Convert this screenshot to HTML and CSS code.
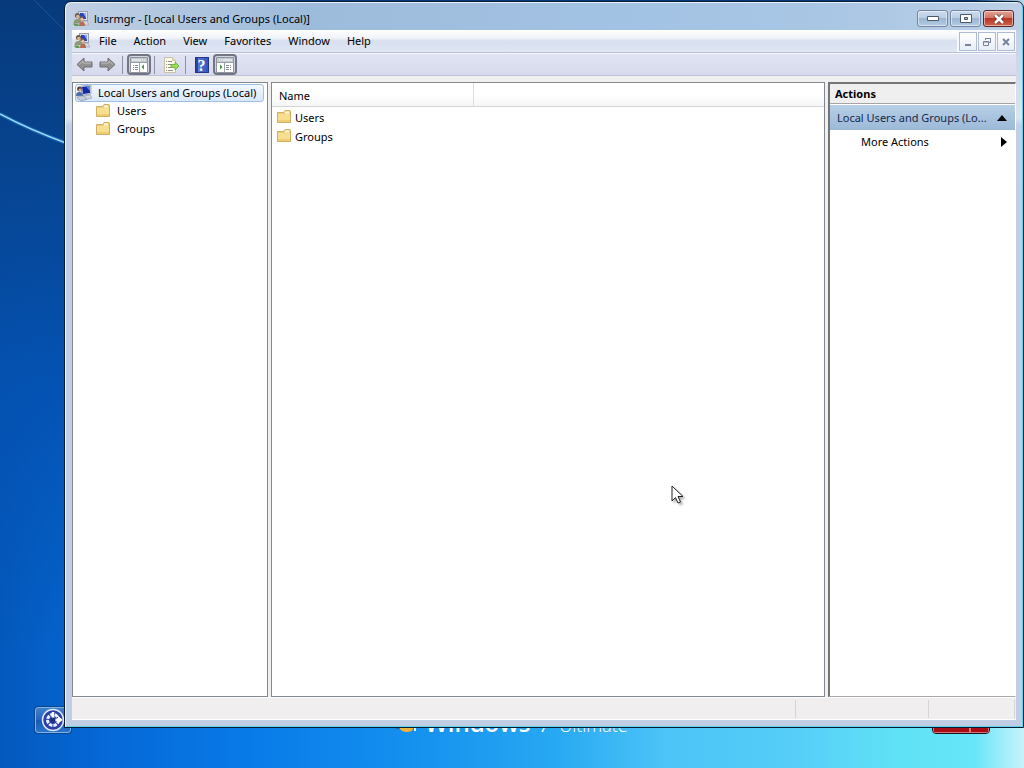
FILE: index.html
```html
<!DOCTYPE html>
<html lang="en">
<head>
    <meta charset="UTF-8">
    <meta name="viewport" content="width=device-width, initial-scale=1.0">
    <title>lusrmgr - [Local Users and Groups (Local)]</title>
    <link rel="stylesheet" href="styles.css">
</head>
<body>
    <svg class="sprite" aria-hidden="true">
        <symbol id="icon-users" viewBox="0 0 16 16">
            <rect x="5.500" y=".5" width="9" height="9" fill="#dfe2ea" stroke="#9a9fb0"/>
            <rect x="7" y="2" width="6" height="6" fill="#2a42b8"/>
            <path d="M10 2h3v5z" fill="#8eaaf0"/>
            <path d="M9 10h5l2 4h-6z" fill="#d5d7de" stroke="#9a9ca6" stroke-width=".6"/>
            <circle cx="4.500" cy="4.500" r="2.600" fill="#6b5a4c"/>
            <circle cx="4.800" cy="5.500" r="1.800" fill="#dcb48e"/>
            <path d="M.5 13c0-4 2-5 4-5s3 1 4 4z" fill="#8b9a72"/>
            <circle cx="8.500" cy="7.500" r="2.200" fill="#7d6048"/>
            <circle cx="8.800" cy="8.300" r="1.500" fill="#ecc8a4"/>
            <path d="M6 15c0-3 1-4.500 3-4.500s3 1.500 3 4.500z" fill="#b96a58"/>
            <path d="M0 13h5l1 2H2z" fill="#5f9b4a"/>
        </symbol>
        <symbol id="icon-computer" viewBox="0 0 16 16">
            <path d="M5 1l10-1v9l-9 1z" fill="#d9dde6" stroke="#8d96ab" stroke-width=".7"/>
            <path d="M6 2l8-1v7l-7 1z" fill="#1229a8"/>
            <path d="M10 1.500l4-.5v5z" fill="#5d86ea"/>
            <path d="M7 11l7-1 2 3-8 2z" fill="#d3d6de" stroke="#8d96ab" stroke-width=".6"/>
            <circle cx="3.500" cy="4" r="2.400" fill="#54443c"/>
            <circle cx="4" cy="5" r="1.500" fill="#d9b08c"/>
            <path d="M0 11c0-3 1-4 3.500-4S7 8 7 11z" fill="#4a6fa8"/>
            <path d="M2 11h6l3 3-6 2-4-3z" fill="#c3cbd9" stroke="#8290a8" stroke-width=".6"/>
        </symbol>
        <symbol id="icon-folder" viewBox="0 0 14 14">
            <path d="M.5 2.500h6l1.500-2h5l.5 1v11H.5z" fill="#edcf78" stroke="#cdb066"/>
            <path d="M8 1.500h4v2H8z" fill="#fff8dc"/>
            <path d="M1 4h12v8H1z" fill="#f8df90"/>
            <path d="M1 10h12v2H1z" fill="#efcd73"/>
        </symbol>
        <symbol id="icon-arrow" viewBox="0 0 17 15">
            <path d="M1 7.500l7-6.500v4h8v5H8v4z" fill="#929292" stroke="#6e6e6e"/>
            <path d="M3 7.500L7 4v2h8" fill="none" stroke="#bdbdbd"/>
        </symbol>
        <symbol id="icon-pane" viewBox="0 0 18 16">
            <path d="M.5.5h17v15H.5z" fill="#fff" stroke="#8f959f"/>
            <path d="M1 1h16v4H1z" fill="#c4c8cf"/>
            <path d="M2 3h9M12 3h1M14 3h1" stroke="#fff"/>
            <path d="M1 5.500h16M9.500 6v9" stroke="#9aa0aa"/>
            <path d="M3 8.500h1m1 0h3M3 10.500h1m1 0h3M3 12.500h1m1 0h3" stroke="#858b95"/>
            <path d="M14 7.500v5L11.500 10z" fill="#3f9445"/>
        </symbol>
        <symbol id="icon-export" viewBox="0 0 16 16">
            <path d="M1.500.5h8l3 3v12h-11z" fill="#fffdf1" stroke="#c9c3a4"/>
            <path d="M9.500.5v3h3" fill="#eee6c3" stroke="#c9c3a4"/>
            <path d="M3 4.500h1m1 0h4M3 7.500h1m1 0h4M3 10.500h1m1 0h3M3 13.500h1m1 0h5" stroke="#8a907e"/>
            <path d="M8 7.500h4V5l4 4-4 4v-2.500H8z" fill="#9bdb58" stroke="#62ad34" stroke-width=".8"/>
        </symbol>
    </svg>

    <div class="desktop">
        <svg class="ray" viewBox="0 0 66 144" aria-hidden="true">
            <path d="M0 114Q30 130 66 143" fill="none" stroke="#2f8ad6" stroke-width="4" opacity=".4"/>
            <path d="M0 114Q30 130 66 143" fill="none" stroke="#9bdcf8" stroke-width="1.500"/>
            <path d="M34 0L66 32" stroke="#2a6ba8" stroke-width="1" opacity=".6"/>
        </svg>
        <button class="ease" aria-label="Ease of access">
            <svg viewBox="0 0 24 24" width="24" height="24">
                <circle cx="12" cy="12" r="10.500" fill="#2a3fa4" stroke="#dfe8fa" stroke-width="1.500"/>
                <circle cx="12" cy="12" r="5.500" fill="none" stroke="#e8f0fc" stroke-width="3" stroke-dasharray="3.500 1"/>
                <path d="M12 12V4M12 12h8" stroke="#fff" stroke-width="2.500"/>
                <path d="M17 8l5 4-5 3z" fill="#fff"/>
                <circle cx="12" cy="12" r="2.500" fill="#173080"/>
            </svg>
        </button>
        <div class="brand">
            <svg class="flag" viewBox="0 0 28 34" width="28" height="34" aria-hidden="true">
                <path d="M2 6q6-4 11 0v11q-5-4-11 0z" fill="#ef5a2b"/>
                <path d="M15 7q6 4 11 0v11q-5 4-11 0z" fill="#8cc63f"/>
                <path d="M2 19q6-4 11 0v9q-5-4-11 0z" fill="#2b8ce0"/>
                <path d="M11 20h13v11q-1 3-6 3t-7-3z" fill="#f3b136"/>
                <path d="M1 29h9v2z" fill="#165a90"/>
                <path d="M25 29h2v4h-2z" fill="#d8f2ff"/>
            </svg>
            <span class="brand-name">Windows</span>
            <span class="brand-seven">7</span>
            <span class="brand-edition">Ultimate</span>
        </div>
        <div class="power">
            <button class="power-main" aria-label="Shut down"></button>
            <button class="power-more" aria-label="Shut down options"></button>
        </div>

        <main class="window">
            <header class="title-bar">
                <svg class="icon"><use href="#icon-users"/></svg>
                <h1>lusrmgr - [Local Users and Groups (Local)]</h1>
                <div class="caption-buttons">
                    <button aria-label="Minimize"><svg viewBox="0 0 12 6" width="12" height="6"><path d="M.5.5h11v4H.5z" fill="#fff" stroke="#4d5a6e"/></svg></button>
                    <button aria-label="Maximize"><svg viewBox="0 0 12 10" width="12" height="10"><path d="M.5.5h11v8H.5z" fill="#fff" stroke="#4d5a6e"/><path d="M4.500 3.500h3v2h-3z" fill="#9fb4cd" stroke="#4d5a6e"/></svg></button>
                    <button class="close" aria-label="Close"><svg viewBox="0 0 12 10" width="12" height="10"><path d="M2 1l8 8M10 1L2 9" stroke="#5d3434" stroke-width="4"/><path d="M2 1l8 8M10 1L2 9" stroke="#fff" stroke-width="2.500"/></svg></button>
                </div>
            </header>

            <nav class="menu-bar">
                <svg class="icon"><use href="#icon-users"/></svg>
                <button>File</button>
                <button>Action</button>
                <button>View</button>
                <button>Favorites</button>
                <button>Window</button>
                <button>Help</button>
                <div class="child-buttons">
                    <button aria-label="Minimize child window"><svg viewBox="0 0 10 10" width="10" height="10"><path d="M2 8h6" stroke="#76859a" stroke-width="2"/></svg></button>
                    <button aria-label="Restore child window"><svg viewBox="0 0 10 10" width="10" height="10"><path d="M3.500 3V1.500h5v4H7M3 1.500h6" fill="none" stroke="#76859a"/><path d="M1.500 4.500h5v4h-5zM1 5h6" fill="none" stroke="#76859a"/></svg></button>
                    <button aria-label="Close child window"><svg viewBox="0 0 10 10" width="10" height="10"><path d="M2 2l6 6M8 2L2 8" stroke="#76859a" stroke-width="2"/></svg></button>
                </div>
            </nav>

            <div class="tool-bar">
                <button aria-label="Back"><svg class="arrow"><use href="#icon-arrow"/></svg></button>
                <button aria-label="Forward"><svg class="arrow flip"><use href="#icon-arrow"/></svg></button>
                <span class="divider"></span>
                <button class="pressed" aria-label="Show/Hide Console Tree"><svg class="pane-icon"><use href="#icon-pane"/></svg></button>
                <span class="divider"></span>
                <button aria-label="Export List"><svg class="icon"><use href="#icon-export"/></svg></button>
                <span class="divider"></span>
                <button class="help" aria-label="Help"><span>?</span></button>
                <button class="pressed" aria-label="Show/Hide Action Pane"><svg class="pane-icon flip"><use href="#icon-pane"/></svg></button>
            </div>

            <div class="panes">
                <section class="tree">
                    <button class="node selected"><svg class="icon"><use href="#icon-computer"/></svg>Local Users and Groups (Local)</button>
                    <ul>
                        <li><button class="node"><svg class="folder"><use href="#icon-folder"/></svg>Users</button></li>
                        <li><button class="node"><svg class="folder"><use href="#icon-folder"/></svg>Groups</button></li>
                    </ul>
                </section>

                <section class="list">
                    <table>
                        <thead>
                            <tr><th class="name" scope="col">Name</th><td></td></tr>
                        </thead>
                        <tbody>
                            <tr><td><svg class="folder"><use href="#icon-folder"/></svg>Users</td><td></td></tr>
                            <tr><td><svg class="folder"><use href="#icon-folder"/></svg>Groups</td><td></td></tr>
                        </tbody>
                    </table>
                </section>

                <aside class="actions">
                    <h2>Actions</h2>
                    <button class="group"><span>Local Users and Groups (Lo...</span><svg viewBox="0 0 10 6" width="10" height="6"><path d="M0 6l5-6 5 6z"/></svg></button>
                    <button class="more"><span>More Actions</span><svg viewBox="0 0 6 10" width="6" height="10"><path d="M0 0l6 5-6 5z"/></svg></button>
                </aside>
            </div>

            <footer class="status-bar">
                <span class="status-main"></span>
                <span class="status-mid"></span>
                <span class="status-end"></span>
            </footer>
        </main>

        <svg class="cursor" viewBox="0 0 14 20" width="14" height="20" aria-hidden="true">
            <path d="M1 1v15l3.500-3.500L7 18l2.500-1L7 11.500h5z" fill="#fff" stroke="#222"/>
        </svg>
    </div>
</body>
</html>
```

FILE: styles.css
```css
* {
    box-sizing: border-box;
}
body {
    margin: 0;
    font-family: "Noto Sans", "Open Sans", sans-serif;
    font-size: 11px;
    line-height: 18px;
    color: #000;
}
button {
    margin: 0;
    padding: 0;
    border: none;
    background: none;
    font: inherit;
    color: inherit;
}
svg {
    flex: none;
}
.sprite {
    position: absolute;
    width: 0;
    height: 0;
}
.icon {
    width: 16px;
    height: 16px;
}
.folder {
    width: 14px;
    height: 14px;
}
.flip {
    transform: scaleX(-1);
}

/* desktop */
.desktop {
    position: relative;
    min-height: 100vh;
    overflow: hidden;
    background:
        linear-gradient(to left, rgba(215, 245, 252, 0.85), rgba(180, 240, 250, 0) 50px),
        linear-gradient(to bottom, #063a7c 0, #07438e 20%, rgba(4, 80, 175, 0.85) 50%, rgba(0, 92, 200, 0) 85%),
        linear-gradient(to right, #0459bc 0, #0568d6 10%, #087ae8 24%, #1490ef 40%, #27a8f2 54%, #4cc4f7 65%, #55cdf8 77%, #60e2f6 88%, #6ae8f8 100%);
}
.ray {
    position: absolute;
    top: 0;
    left: 0;
    width: 66px;
    height: 144px;
}
.ease {
    position: absolute;
    left: 35px;
    bottom: 35px;
    display: flex;
    align-items: center;
    width: 36px;
    height: 26px;
    padding-left: 5px;
    border: 1px solid #7db4e6;
    border-radius: 3px;
    background: linear-gradient(#3f80cc 0, #2564b8 50%, #1559b4 50%, #2a74cc);
    box-shadow: 0 0 0 1px #0b4590;
}
.brand {
    position: absolute;
    left: 389px;
    bottom: 25px;
    display: flex;
    align-items: baseline;
    color: #fff;
    line-height: 36px;
}
.flag {
    margin-right: 8px;
}
.brand-name {
    font-family: "Open Sans", sans-serif;
    font-size: 24px;
    font-weight: 600;
}
.brand-seven {
    margin-left: 7px;
    font-size: 24px;
    font-weight: 300;
}
.brand-edition {
    margin-left: 8px;
    font-family: "Open Sans", sans-serif;
    font-size: 18px;
    font-weight: 300;
}
.power {
    position: absolute;
    right: 34px;
    bottom: 34px;
    display: flex;
    height: 28px;
    border: 1px solid #1c1020;
    border-radius: 4px;
    overflow: hidden;
}
.power button {
    border: 1px solid #d2767a;
    background: #a80d14;
}
.power-main {
    width: 37px;
}
.power-more {
    width: 19px;
}

/* window frame */
.window {
    position: absolute;
    top: 1px;
    right: 0;
    bottom: 40px;
    left: 64px;
    display: flex;
    flex-direction: column;
    padding: 1px 7px 7px;
    border: 1px solid #0c1c30;
    border-radius: 7px 7px 0 0;
    background: linear-gradient(to bottom, #b9cde5 0, #d3deee 12%, #dbe6f2 16%, #c0cfe5 17%, #bfcee4 100%);
    box-shadow: inset 1px 1px #e8f4fc, inset -1px -1px #5fd2ee;
}
.title-bar {
    display: flex;
    align-items: center;
    height: 27px;
    margin: 0 -6px;
    padding: 4px 8px 0 7px;
    border-radius: 6px 6px 0 0;
    background: linear-gradient(to right, #c1d0e4, #9dbbdb 25%, #a3c3e4 60%, #a9c6e4 80%, #bcd0e6);
}
.title-bar h1 {
    margin: 0 auto 0 5px;
    font-size: 11px;
    font-weight: 400;
}
.caption-buttons {
    display: flex;
    gap: 2px;
}
.caption-buttons button {
    display: flex;
    align-items: center;
    justify-content: center;
    width: 31px;
    height: 17px;
    border: 1px solid #7385a0;
    border-radius: 3px;
    background: linear-gradient(#cbdcee 0, #b8cde4 50%, #9cb6d3 50%, #b3cbe4);
    box-shadow: inset 0 0 0 1px rgba(255, 255, 255, 0.5);
}
.caption-buttons .close {
    border-color: #5a2328;
    background: linear-gradient(#e3a294 0, #d2705f 50%, #b83423 50%, #d0644a);
}

.menu-bar {
    display: flex;
    align-items: center;
    gap: 1px;
    height: 23px;
    padding-left: 2px;
    border-bottom: 1px solid #b8c1d6;
    background: linear-gradient(#fff 0, #f1f4fa 35%, #d8dfee 50%, #e0e6f4);
}
.menu-bar > button {
    padding: 0 8px;
}
.child-buttons {
    display: flex;
    align-self: stretch;
    gap: 1px;
    margin-left: auto;
    padding: 2px 1px 1px 2px;
    background: #f7f9fd;
}
.child-buttons button {
    display: flex;
    align-items: center;
    justify-content: center;
    width: 18px;
    border: 1px solid #aebbd0;
    background: linear-gradient(#fff, #e7edf7);
}

.tool-bar {
    display: flex;
    align-items: center;
    height: 23px;
    padding-left: 1px;
    border-top: 1px solid #f5f7fc;
    border-bottom: 1px solid #bec4d5;
    background: linear-gradient(#e1e4f3, #d7daed);
}
.tool-bar button {
    display: flex;
    align-items: center;
    justify-content: center;
    width: 23px;
    height: 21px;
}
.tool-bar .arrow {
    width: 17px;
    height: 15px;
}
.tool-bar .pressed {
    width: 24px;
    border: 2px solid #737682;
    border-radius: 4px;
    background: #cfd3e2;
}
.pane-icon {
    width: 18px;
    height: 16px;
}
.divider {
    width: 1px;
    height: 18px;
    margin: 0 4px 0 3px;
    background: #8c90a0;
}
.help span {
    width: 14px;
    height: 16px;
    border: 1px solid #20358c;
    background: linear-gradient(to right, #2b459f 0, #2b459f 2px, #5c7ad6 2px, #3553bd);
    color: #fff;
    font-family: "Liberation Serif", serif;
    font-size: 16px;
    font-weight: 700;
    line-height: 15px;
}

/* panes */
.panes {
    display: flex;
    flex: 1;
    gap: 3px;
    padding-top: 6px;
    background: #f0f0f0;
}
.tree {
    width: 196px;
    padding: 1px 2px;
    border: 1px solid #828790;
    background: #fff;
}
.node {
    display: flex;
    align-items: center;
    gap: 7px;
    height: 18px;
    white-space: nowrap;
}
.tree .selected {
    gap: 6px;
    width: 189px;
    border: 1px solid #9fc0e4;
    border-radius: 3px;
    background: linear-gradient(#f2f7fe, #d9e8fb);
}
.tree ul {
    margin: 0;
    padding: 0 0 0 21px;
    list-style: none;
}
.list {
    flex: 1;
    border: 1px solid #828790;
    background: #fff;
}
.list table {
    width: 100%;
    border-collapse: collapse;
    table-layout: fixed;
}
.list th,
.list td {
    height: 19px;
    padding: 0 5px;
    text-align: left;
    font-weight: 400;
}
.list thead th,
.list thead td {
    height: 23px;
    border-bottom: 1px solid #d5d5d5;
    background: linear-gradient(#fff 50%, #f5f6f8);
}
.list thead .name {
    width: 201px;
    padding: 3px 7px 0;
    border-right: 1px solid #dcdfe4;
}
.list tbody tr:first-child td {
    height: 21px;
    padding-top: 2px;
}
.list .folder {
    margin-right: 4px;
    vertical-align: -2px;
}
.actions {
    width: 188px;
    border-top: 2px solid #757575;
    border-left: 2px solid #757575;
    border-right: 1px solid #fff;
    border-bottom: 1px solid #aaa;
    background: #fff;
}
.actions h2 {
    margin: 0;
    padding: 1px 5px 0;
    border-bottom: 1px solid #a5a5a5;
    background: #f0eff0;
    font-size: 11px;
    font-weight: 700;
}
.actions button {
    display: flex;
    align-items: center;
    justify-content: space-between;
    width: 100%;
    height: 24px;
    padding: 0 8px 0 7px;
    text-align: left;
    white-space: nowrap;
}
.actions .group {
    height: 25px;
    margin-top: 1px;
    background: linear-gradient(#b8cfe6, #9bb9d7);
    color: #16294a;
}
.actions .group svg {
    fill: #000;
}
.actions .more {
    padding-left: 31px;
}

.status-bar {
    display: flex;
    height: 23px;
    padding: 2px 1px 1px;
    border-top: 1px solid #fff;
    border-bottom: 1px solid #fff;
    background: #f0eeee;
}
.status-bar span {
    border-right: 1px solid #d5d5d5;
}
.status-main {
    flex: 1;
}
.status-mid {
    width: 133px;
}
.status-end {
    width: 86px;
}

.cursor {
    position: absolute;
    top: 485px;
    left: 671px;
    filter: drop-shadow(2px 2px 1px rgba(0, 0, 0, 0.3));
}
```
